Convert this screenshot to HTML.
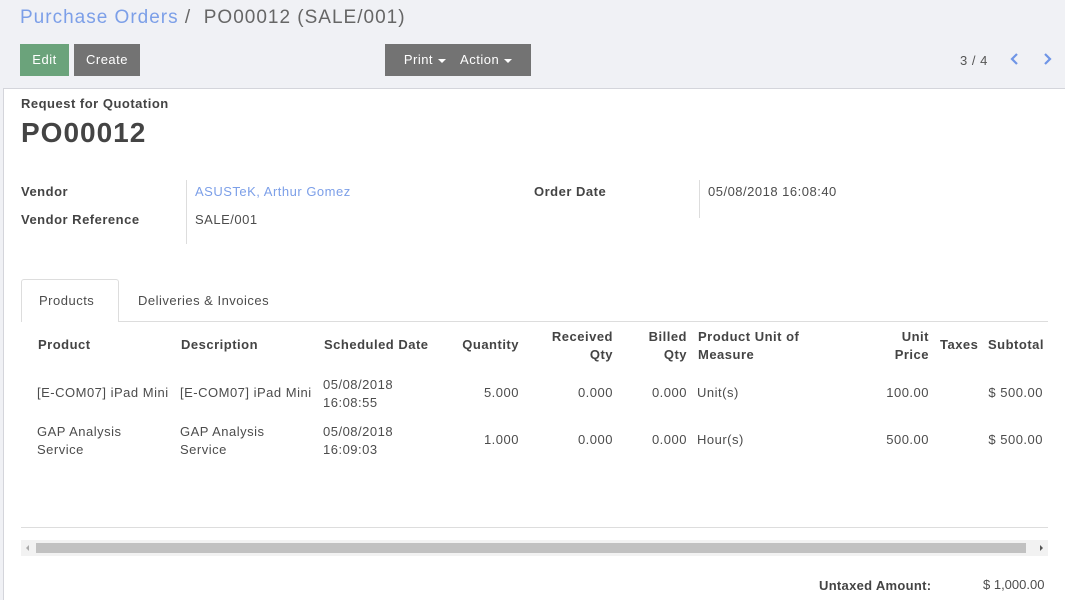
<!DOCTYPE html>
<html><head><meta charset="utf-8"><style>
*{margin:0;padding:0;box-sizing:border-box}
body{width:1065px;height:600px;overflow:hidden;background:#f0f1f5;font-family:"Liberation Sans",sans-serif;color:#4c4c4c;font-size:13px;position:relative;letter-spacing:0.5px}
.a{position:absolute;white-space:nowrap}
.btn{position:absolute;top:44px;height:32px;color:#fff;font-size:13px;line-height:32px;text-align:center}
.caret{display:inline-block;width:0;height:0;border-left:4px solid transparent;border-right:4px solid transparent;border-top:4px solid #fff;vertical-align:middle;margin-left:5px}
.sheet{position:absolute;left:3px;top:88px;width:1062px;height:512px;background:#fff;border-top:1px solid #d4d5db;border-left:1px solid #d4d5db}
.b{font-weight:bold;color:#444}
.r{text-align:right}
</style></head><body>
<div class="a" style="left:20px;top:7px;font-size:19px;color:#7c9fe8;letter-spacing:1px">Purchase Orders <span style="color:#666">/&nbsp; PO00012 (SALE/001)</span></div>
<div class="btn" style="left:20px;width:49px;background:#6ba37b">Edit</div>
<div class="btn" style="left:74px;width:66px;background:#737373">Create</div>
<div class="btn" style="left:385px;width:146px;background:#737373"><span style="margin-right:14px">Print<span class="caret"></span></span>Action<span class="caret"></span></div>
<div class="a" style="left:960px;top:53px;color:#555">3 / 4</div>
<svg class="a" style="left:1010px;top:53px" width="10" height="12"><path d="M7 1L2 6L7 11" stroke="#6f95e6" stroke-width="2.2" fill="none"/></svg>
<svg class="a" style="left:1042px;top:53px" width="10" height="12"><path d="M3 1L8 6L3 11" stroke="#6f95e6" stroke-width="2.2" fill="none"/></svg>
<div class="sheet"></div>
<div class="a b" style="left:21px;top:96px;font-size:13px">Request for Quotation</div>
<div class="a b" style="left:21px;top:117px;font-size:28px;letter-spacing:1px">PO00012</div>
<div class="a b" style="left:21px;top:184px">Vendor</div>
<div class="a b" style="left:21px;top:212px">Vendor Reference</div>
<div class="a" style="left:186px;top:180px;width:1px;height:64px;background:#ddd"></div>
<div class="a" style="left:195px;top:184px;color:#7c9fe8">ASUSTeK, Arthur Gomez</div>
<div class="a" style="left:195px;top:212px">SALE/001</div>
<div class="a b" style="left:534px;top:184px">Order Date</div>
<div class="a" style="left:699px;top:180px;width:1px;height:38px;background:#ddd"></div>
<div class="a" style="left:708px;top:184px">05/08/2018 16:08:40</div>
<div class="a" style="left:21px;top:321px;width:1027px;height:1px;background:#ddd"></div>
<div class="a" style="left:21px;top:279px;width:98px;height:43px;background:#fff;border:1px solid #ddd;border-bottom:none;border-radius:3px 3px 0 0"></div>
<div class="a" style="left:39px;top:293px">Products</div>
<div class="a" style="left:138px;top:293px">Deliveries &amp; Invoices</div>
<div class="a b" style="left:38px;top:337px">Product</div>
<div class="a b" style="left:181px;top:337px">Description</div>
<div class="a b" style="left:324px;top:337px">Scheduled Date</div>
<div class="a b r" style="left:440px;width:79px;top:337px">Quantity</div>
<div class="a b r" style="left:530px;width:83px;top:328px;line-height:18px">Received<br>Qty</div>
<div class="a b r" style="left:620px;width:67px;top:328px;line-height:18px">Billed<br>Qty</div>
<div class="a b" style="left:698px;top:328px;line-height:18px">Product Unit of<br>Measure</div>
<div class="a b r" style="left:860px;width:69px;top:328px;line-height:18px">Unit<br>Price</div>
<div class="a b" style="left:940px;top:337px">Taxes</div>
<div class="a b" style="left:988px;top:337px">Subtotal</div>
<div class="a" style="left:37px;top:385px">[E-COM07] iPad Mini</div>
<div class="a" style="left:180px;top:385px">[E-COM07] iPad Mini</div>
<div class="a" style="left:323px;top:376px;line-height:18px">05/08/2018<br>16:08:55</div>
<div class="a r" style="left:440px;width:79px;top:385px">5.000</div>
<div class="a r" style="left:530px;width:83px;top:385px">0.000</div>
<div class="a r" style="left:620px;width:67px;top:385px">0.000</div>
<div class="a" style="left:697px;top:385px">Unit(s)</div>
<div class="a r" style="left:860px;width:69px;top:385px">100.00</div>
<div class="a r" style="left:960px;width:83px;top:385px">$ 500.00</div>
<div class="a" style="left:37px;top:423px;line-height:18px">GAP Analysis<br>Service</div>
<div class="a" style="left:180px;top:423px;line-height:18px">GAP Analysis<br>Service</div>
<div class="a" style="left:323px;top:423px;line-height:18px">05/08/2018<br>16:09:03</div>
<div class="a r" style="left:440px;width:79px;top:432px">1.000</div>
<div class="a r" style="left:530px;width:83px;top:432px">0.000</div>
<div class="a r" style="left:620px;width:67px;top:432px">0.000</div>
<div class="a" style="left:697px;top:432px">Hour(s)</div>
<div class="a r" style="left:860px;width:69px;top:432px">500.00</div>
<div class="a r" style="left:960px;width:83px;top:432px">$ 500.00</div>
<div class="a" style="left:21px;top:527px;width:1027px;height:1px;background:#ddd"></div>
<div class="a" style="left:21px;top:540px;width:1027px;height:16px;background:#f2f2f2"></div>
<div class="a" style="left:36px;top:543px;width:990px;height:10px;background:#c1c1c1"></div>
<div class="a" style="left:26px;top:545px;width:0;height:0;border-top:3px solid transparent;border-bottom:3px solid transparent;border-right:3px solid #aaa"></div>
<div class="a" style="left:1040px;top:545px;width:0;height:0;border-top:3px solid transparent;border-bottom:3px solid transparent;border-left:3px solid #555"></div>
<div class="a b" style="left:819px;top:578px;letter-spacing:0.3px">Untaxed Amount:</div>
<div class="a" style="left:983px;top:577px;letter-spacing:0">$ 1,000.00</div>
</body></html>
